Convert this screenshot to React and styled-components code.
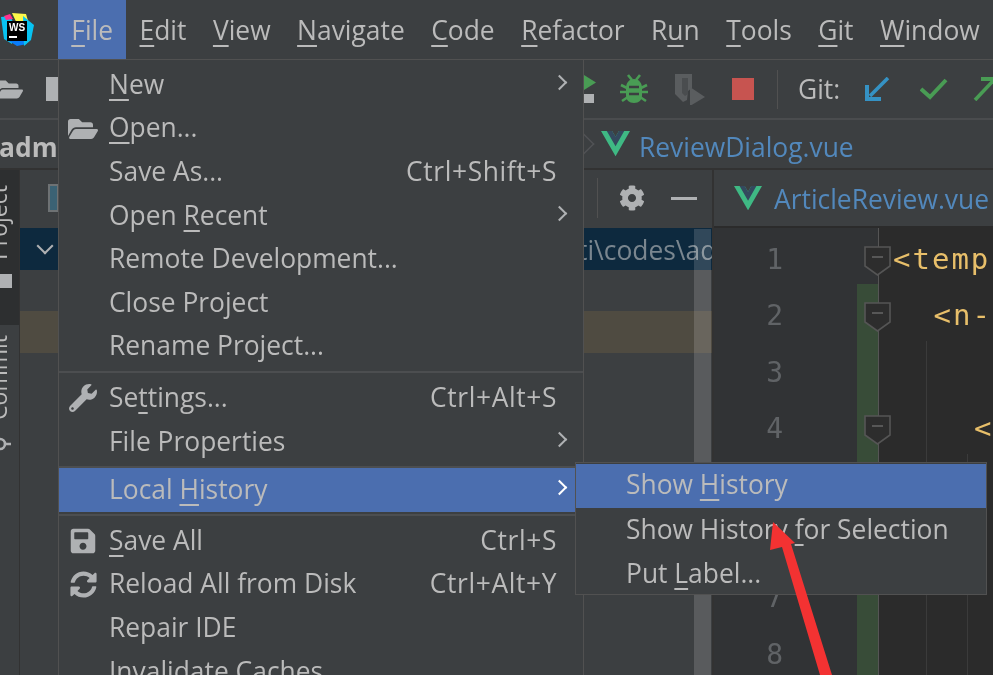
import React from "react";
import styled, { createGlobalStyle } from "styled-components";
import { FaCog, FaFolderOpen, FaSave, FaSyncAlt, FaWrench } from "react-icons/fa";

const menuBarItems = ["_File", "_Edit", "_View", "_Navigate", "_Code", "_Refactor", "R_un", "_Tools", "_Git", "_Window"];

const fileMenu = [
	[
		{ label: "_New", arrow: true },
		{ label: "_Open...", icon: "open" },
		{ label: "Save As...", shortcut: "Ctrl+Shift+S" },
		{ label: "Open _Recent", arrow: true },
		{ label: "Remote Development..." },
		{ label: "Close Project" },
		{ label: "Rename Project..." },
	],
	[
		{ label: "Se_ttings...", icon: "settings", shortcut: "Ctrl+Alt+S" },
		{ label: "File Properties", arrow: true },
	],
	[{ label: "Local _History", arrow: true, active: true }],
	[
		{ label: "_Save All", icon: "save", shortcut: "Ctrl+S" },
		{ label: "Reload All from Disk", icon: "reload", shortcut: "Ctrl+Alt+Y" },
		{ label: "Repair IDE" },
		{ label: "Invalidate Caches" },
	],
];

// height of the separator above each group of the file menu
const separatorHeights = [0, 8, 4.5, 7.5];

const historyMenu = [
	{ label: "Show _History", active: true },
	{ label: "Show History _for Selection" },
	{ label: "Put _Label..." },
];

const codeLines = [
	{ code: "<temp", indent: 0, fold: true, guides: 0 },
	{ code: "<n-", indent: 1, fold: true, changed: true, guides: 0 },
	{ code: "", indent: 0, changed: true, guides: 1 },
	{ code: "<", indent: 2, fold: true, changed: true, guides: 1 },
	{ code: "", indent: 0, changed: true, guides: 2 },
	{ code: "", indent: 0, changed: true, guides: 2 },
	{ code: "", indent: 0, changed: true, guides: 2 },
	{ code: "", indent: 0, changed: true, guides: 2 },
];

// "_" marks the mnemonic letter, as in the IDE's action names
const Label = ({ text }) => {
	const at = text.indexOf("_");
	if (at < 0) return text;
	return (
		<>
			{text.slice(0, at)}
			<Mnemonic>{text[at + 1]}</Mnemonic>
			{text.slice(at + 2)}
		</>
	);
};

const VueIcon = ({ size }) => (
	<svg width={size} height={size * 0.87} viewBox="0 0 261 226">
		<path fill="#3fb984" d="M161 0l-30 52L100 0H0l131 226L261 0z" />
		<path fill="#34495e" d="M161 0l-30 52L100 0H52l79 136L209 0z" />
	</svg>
);

const LogoIcon = () => (
	<svg width="34" height="34" viewBox="0 0 34 34">
		<path fill="#07c3f2" d="M0 4l10-1 4 14-3 14-8-5z" />
		<path fill="#087cfa" d="M5 26l11 7 10-2-6-8z" />
		<path fill="#fcf84a" d="M11 0l14 1 3 10-10 4z" />
		<path fill="#07c3f2" d="M22 3l11 9-3 15-7 6z" />
		<path fill="#ff318c" d="M3 3l6-2 3 5-7 1z" />
		<rect x="6" y="8" width="20" height="20" fill="#000" />
		<text x="8" y="18" fontFamily="Liberation Sans" fontWeight="700" fontSize="10" fill="#fff">
			WS
		</text>
		<rect x="8" y="23" width="8" height="2" fill="#fff" />
	</svg>
);

const BugIcon = () => (
	<svg width="28" height="30" viewBox="0 0 28 30">
		<g stroke="#499c54" strokeWidth="2.6" fill="none">
			<path d="M8 1l4 5M20 1l-4 5M1 11l6 3M27 11l-6 3M0 18h6M28 18h-6M2 27l6-4M26 27l-6-4" />
		</g>
		<path fill="#499c54" d="M14 5c5 0 8 4 8 9v7c0 5-3 8-8 8s-8-3-8-8v-7c0-5 3-9 8-9z" />
		<path stroke="#3c3f41" strokeWidth="2.4" d="M9 13h10M9 20h10" />
	</svg>
);

const RerunIcon = () => (
	<svg width="33" height="32" viewBox="0 0 33 32">
		<path fill="#5a5d5f" d="M2 1h17v14l-4 3-1 9-4 2-8-8z" />
		<path fill="#4a4d4f" d="M9 5h6v16l-3 2-3-3z" />
		<path fill="#5a5d5f" d="M17 14l15 10-15 9z" />
	</svg>
);

const ArrowIn = () => (
	<svg width="25" height="24" viewBox="0 0 25 24">
		<path stroke="#3592c4" strokeWidth="3.6" fill="none" d="M23 1L5 19" />
		<path fill="#3592c4" d="M0 8h4v12h12v4H0z" />
	</svg>
);

const CheckIcon = () => (
	<svg width="28" height="22" viewBox="0 0 28 22">
		<path stroke="#499c54" strokeWidth="4" fill="none" d="M1 11l9 8L26 2" />
	</svg>
);

const ArrowOut = () => (
	<svg width="30" height="24" viewBox="0 0 30 24">
		<path stroke="#499c54" strokeWidth="3.6" fill="none" d="M2 23L20 4" />
		<path fill="#499c54" d="M8 0h16v16h-4V4H8z" />
	</svg>
);

const FoldIcon = () => (
	<svg width="27" height="31" viewBox="0 0 27 31">
		<path fill="#2d2d2d" stroke="#555" strokeWidth="1.6" d="M1 1h25v19L13.5 29 1 20z" />
		<path stroke="#666" strokeWidth="1.5" d="M8 11h11" />
	</svg>
);

const CommitIcon = () => (
	<svg width="22" height="16" viewBox="0 0 22 16">
		<circle cx="11" cy="8" r="5" fill="none" stroke="#afb1b3" strokeWidth="2.6" />
		<path stroke="#afb1b3" strokeWidth="2.6" d="M0 8h6M16 8h6" />
	</svg>
);

const menuIcons = {
	open: <FaFolderOpen size={30} />,
	settings: <FaWrench size={28} />,
	save: <FaSave size={28} />,
	reload: <FaSyncAlt size={27} />,
};

const MenuRow = ({ item }) => (
	<Row $active={item.active}>
		<RowIcon>{item.icon && menuIcons[item.icon]}</RowIcon>
		<RowLabel>
			<Label text={item.label} />
		</RowLabel>
		{item.shortcut && <Shortcut>{item.shortcut}</Shortcut>}
		{item.arrow && <Chevron $bright={item.active} />}
	</Row>
);

const GlobalStyle = createGlobalStyle`
	html, body {
		margin: 0;
		background: #3c3f41;
	}
	* {
		box-sizing: border-box;
	}
`;

const App = () => {
	return (
		<Page>
			<GlobalStyle />
			<MenuBar>
				<LogoSlot>
					<LogoIcon />
				</LogoSlot>
				{menuBarItems.map((item, i) => (
					<MenuBarItem key={item} $open={i === 0}>
						<Label text={item} />
					</MenuBarItem>
				))}
			</MenuBar>

			<Toolbar>
				<FolderSlot>
					<FaFolderOpen size={27} />
				</FolderSlot>
				<SaveStub />
				<RunGroup>
					<PlayStack>
						<PlayStub />
						<StopStub />
					</PlayStack>
					<BugSlot>
						<BugIcon />
					</BugSlot>
					<RerunSlot>
						<RerunIcon />
					</RerunSlot>
					<StopButton />
					<ToolbarDivider />
					<GitLabel>Git:</GitLabel>
					<ArrowSlot>
						<ArrowIn />
					</ArrowSlot>
					<CheckSlot>
						<CheckIcon />
					</CheckSlot>
					<OutSlot>
						<ArrowOut />
					</OutSlot>
				</RunGroup>
			</Toolbar>

			<NavBar>
				<ProjectName>adm</ProjectName>
				<Crumb>
					<CrumbArrow />
					<VueIcon size={29} />
					<FileName>ReviewDialog.vue</FileName>
				</Crumb>
			</NavBar>

			<Workspace>
				<Stripe>
					<StripeTab $active>
						<VerticalText>Project</VerticalText>
						<StripeSquare />
					</StripeTab>
					<StripeTab>
						<VerticalText>Commit</VerticalText>
						<CommitSlot>
							<CommitIcon />
						</CommitSlot>
					</StripeTab>
				</Stripe>

				<ProjectPanel>
					<PanelHeader>
						<PanelIconStub />
						<PanelActions>
							<PanelDivider />
							<FaCog size={26} />
							<MinusBar />
						</PanelActions>
					</PanelHeader>
					<Tree>
						<TreeRow $kind="selected">
							<TreeChevron />
							<TreePath>ti\codes\ad</TreePath>
						</TreeRow>
						<TreeRow />
						<TreeRow $kind="modified" />
						<ScrollThumb />
					</Tree>
				</ProjectPanel>

				<EditorColumn>
					<TabBar>
						<VueIcon size={28} />
						<TabName>ArticleReview.vue</TabName>
					</TabBar>
					<Editor>
						{codeLines.map((line, i) => (
							<CodeRow key={i}>
								<LineNumber>{i + 1}</LineNumber>
								<ChangeCell $changed={line.changed}>
									{line.fold && (
										<FoldSlot>
											<FoldIcon />
										</FoldSlot>
									)}
								</ChangeCell>
								<CodeCell $guides={line.guides}>
									<CodeText $indent={line.indent}>{line.code}</CodeText>
								</CodeCell>
							</CodeRow>
						))}
					</Editor>
				</EditorColumn>
			</Workspace>

			<FileMenu>
				{fileMenu.map((group, i) => (
					<MenuGroup key={i}>
						{i > 0 && <Separator $height={separatorHeights[i]} />}
						{group.map((item) => (
							<MenuRow key={item.label} item={item} />
						))}
					</MenuGroup>
				))}
			</FileMenu>

			<SubMenu>
				{historyMenu.map((item) => (
					<MenuRow key={item.label} item={item} />
				))}
			</SubMenu>

			<RedArrow viewBox="0 0 100 170">
				<path fill="#f33232" d="M11 2L8 30l12-3 38 128h12L29 24l4-1z" />
			</RedArrow>
		</Page>
	);
};

const Page = styled.div`
	position: relative;
	display: flex;
	flex-direction: column;
	width: 993px;
	height: 675px;
	overflow: hidden;
	background: #3c3f41;
	color: #bbbbbb;
	font-family: "Open Sans", "Liberation Sans", sans-serif;
	font-size: 26.4px;
	filter: blur(0.35px);
`;

const Mnemonic = styled.span`
	text-decoration: underline;
	text-decoration-thickness: 2px;
	text-underline-offset: 5px;
`;

const MenuBar = styled.div`
	display: flex;
	flex: 0 0 60px;
	align-items: stretch;
	border-bottom: 1px solid #515151;
`;

const LogoSlot = styled.div`
	display: flex;
	align-items: center;
	width: 58px;
	padding: 0 0 0 1px;
`;

const MenuBarItem = styled.div`
	display: flex;
	align-items: center;
	padding: 0 13.25px;
	white-space: nowrap;
	background: ${({ $open }) => ($open ? "#4b6eaf" : "transparent")};
`;

const Toolbar = styled.div`
	display: flex;
	flex: 0 0 60px;
	align-items: center;
	border-bottom: 2px solid #4a4c4e;
`;

const FolderSlot = styled.div`
	display: flex;
	margin: 0 0 0 -4px;
	color: #afb1b3;
`;

const SaveStub = styled.div`
	width: 12px;
	height: 24px;
	margin: 0 0 0 23px;
	background: #afb1b3;
`;

const RunGroup = styled.div`
	display: flex;
	align-items: center;
	width: 409px;
	margin-left: auto;
	overflow: hidden;
`;

const PlayStack = styled.div`
	display: flex;
	flex: none;
	flex-direction: column;
	gap: 4px;
	width: 12px;
`;

const PlayStub = styled.div`
	width: 12px;
	height: 15px;
	background: #499c54;
	clip-path: polygon(0 0, 100% 50%, 0 100%);
`;

const StopStub = styled.div`
	width: 10px;
	height: 9px;
	background: #afb1b3;
`;

const BugSlot = styled.div`
	display: flex;
	flex: none;
	margin: 0 0 0 24px;
`;

const RerunSlot = styled.div`
	display: flex;
	flex: none;
	margin: 0 0 0 25px;
`;

const StopButton = styled.div`
	flex: none;
	width: 22px;
	height: 22px;
	margin: 0 0 0 26px;
	background: #c75450;
`;

const ToolbarDivider = styled.div`
	flex: none;
	width: 1px;
	height: 39px;
	margin: 0 0 0 23px;
	background: #515151;
`;

const GitLabel = styled.div`
	flex: none;
	margin: 0 0 1px 20px;
`;

const ArrowSlot = styled.div`
	display: flex;
	flex: none;
	margin: 0 0 0 25px;
`;

const CheckSlot = styled.div`
	display: flex;
	flex: none;
	margin: 0 0 0 30px;
`;

const OutSlot = styled.div`
	display: flex;
	flex: none;
	margin: 0 0 0 25px;
`;

const NavBar = styled.div`
	display: flex;
	flex: 0 0 50px;
	align-items: center;
	justify-content: space-between;
	border-bottom: 2px solid #323232;
`;

const ProjectName = styled.div`
	font-weight: 700;
	margin: 0 0 0 -1px;
	padding: 5px 0 0;
`;

const Crumb = styled.div`
	display: flex;
	align-items: center;
	width: 410px;
	gap: 9px;
`;

const CrumbArrow = styled.div`
	width: 10px;
	height: 10px;
	margin: 0 3px 0 -4px;
	border-top: 1px solid #515355;
	border-right: 1px solid #515355;
	transform: rotate(45deg) scale(1.5);
	transform-origin: center;
`;

const FileName = styled.div`
	padding: 5px 0 0;
	color: #5288bc;
`;

const Workspace = styled.div`
	display: flex;
	flex: 1;
	min-height: 0;
`;

const Stripe = styled.div`
	display: flex;
	flex: 0 0 20px;
	flex-direction: column;
	overflow: hidden;
	border-right: 1px solid #323232;
`;

const StripeTab = styled.div`
	display: flex;
	flex-direction: column;
	align-items: flex-start;
	height: ${({ $active }) => ($active ? "155px" : "auto")};
	padding: ${({ $active }) => ($active ? "15px 0 0" : "0")};
	margin: ${({ $active }) => ($active ? "0 0 10px" : "0")};
	background: ${({ $active }) => ($active ? "#2d2f30" : "transparent")};
`;

const VerticalText = styled.div`
	margin: 0 0 0 -17px;
	writing-mode: vertical-rl;
	transform: rotate(180deg);
	font-size: 23px;
	line-height: 30px;
`;

const StripeSquare = styled.div`
	width: 12px;
	height: 14px;
	margin: 14px 0 0;
	background: #afb1b3;
`;

const CommitSlot = styled.div`
	display: flex;
	margin: 16px 0 0 -11px;
`;

const ProjectPanel = styled.div`
	display: flex;
	flex: 0 0 692px;
	flex-direction: column;
	min-width: 0;
	overflow: hidden;
`;

const PanelHeader = styled.div`
	display: flex;
	flex: 0 0 56px;
	align-items: center;
	justify-content: space-between;
`;

const PanelIconStub = styled.div`
	width: 11px;
	height: 28px;
	margin: 0 0 0 28px;
	border: 2px solid #6e7274;
	background: #3b6274;
`;

const PanelActions = styled.div`
	display: flex;
	align-items: center;
	width: 115px;
	gap: 21px;
	color: #afb1b3;
`;

const PanelDivider = styled.div`
	width: 1px;
	height: 40px;
	background: #515151;
`;

const MinusBar = styled.div`
	width: 26px;
	height: 3px;
	margin: 0 0 0 5px;
	background: #afb1b3;
`;

const Tree = styled.div`
	position: relative;
	flex: 1;
	padding: 2px 0 0;
	overflow: hidden;
`;

const treeBackgrounds = { selected: "#0d293e", modified: "#4f4b41" };

const TreeRow = styled.div`
	display: flex;
	align-items: center;
	height: 41.5px;
	white-space: nowrap;
	overflow: hidden;
	background: ${({ $kind }) => treeBackgrounds[$kind] || "transparent"};
`;

const TreeChevron = styled.div`
	flex: none;
	width: 12px;
	height: 12px;
	margin: -6px 0 0 19px;
	border-right: 2px solid #afb1b3;
	border-bottom: 2px solid #afb1b3;
	transform: rotate(45deg);
`;

const TreePath = styled.div`
	margin: 0 0 0 527px;
	padding: 3px 0 0;
	color: #7a868f;
`;

const ScrollThumb = styled.div`
	position: absolute;
	top: 3px;
	right: 1px;
	bottom: 0;
	width: 17px;
	background: rgba(255, 255, 255, 0.15);
`;

const EditorColumn = styled.div`
	display: flex;
	flex: 1;
	flex-direction: column;
	min-width: 0;
	border-left: 2px solid #323232;
`;

const TabBar = styled.div`
	display: flex;
	flex: 0 0 56px;
	align-items: center;
	gap: 12px;
	padding: 0 0 0 20px;
	white-space: nowrap;
	background: #3c3f41;
`;

const TabName = styled.div`
	padding: 2px 0 0;
	color: #5288bc;
`;

const Editor = styled.div`
	flex: 1;
	padding: 2px 0 0;
	overflow: hidden;
	background: #2b2b2b;
`;

const CodeRow = styled.div`
	display: flex;
	height: 56.4px;
`;

const LineNumber = styled.div`
	flex: 0 0 143px;
	padding: 0 74px 0 0;
	text-align: right;
	line-height: 64px;
	font-family: "DejaVu Sans Mono", monospace;
	font-size: 28px;
	color: #606366;
	background: #313335;
`;

const ChangeCell = styled.div`
	position: relative;
	flex: 0 0 22px;
	border-right: 1px solid #555555;
	background: ${({ $changed }) => ($changed ? "#384c38" : "#313335")};
`;

const FoldSlot = styled.div`
	position: absolute;
	top: 18px;
	left: 7px;
	display: flex;
`;

const CodeCell = styled.div`
	flex: 1;
	padding: 0 0 0 14px;
	background-image: ${({ $guides }) =>
		$guides === 2
			? "linear-gradient(#3b3b3b, #3b3b3b), linear-gradient(#3b3b3b, #3b3b3b)"
			: $guides === 1
				? "linear-gradient(#3b3b3b, #3b3b3b)"
				: "none"};
	background-size: 1px 100%, 1px 100%;
	background-repeat: no-repeat;
	background-position: 47px 0, 88px 0;
`;

const CodeText = styled.div`
	padding: 0 0 0 ${({ $indent }) => $indent * 40.5}px;
	font-family: "DejaVu Sans Mono", monospace;
	font-size: 29px;
	letter-spacing: 2px;
	line-height: 62px;
	white-space: pre;
	color: #e8bf6a;
`;

const FileMenu = styled.div`
	position: absolute;
	top: 60px;
	left: 58px;
	width: 526px;
	height: 640px;
	padding: 3.5px 0 0;
	border-left: 1px solid #515151;
	border-right: 1px solid #515151;
	background: #3c3f41;
`;

const MenuGroup = styled.div`
	display: flex;
	flex-direction: column;
`;

const Separator = styled.div`
	height: ${({ $height }) => $height}px;
	padding: 2px 0 0;

	&::before {
		display: block;
		content: "";
		height: 2px;
		background: #4c4e50;
	}
`;

const Row = styled.div`
	display: flex;
	flex: none;
	align-items: center;
	height: 43.6px;
	padding: 0 13px 0 0;
	white-space: nowrap;
	background: ${({ $active }) => ($active ? "#4b6eaf" : "transparent")};
`;

const RowIcon = styled.div`
	display: flex;
	flex: 0 0 50px;
	justify-content: center;
	padding: 0 2px 0 0;
	color: #afb1b3;
`;

const RowLabel = styled.div`
	flex: 1;
	padding: 0 0 3px;
`;

const Shortcut = styled.div`
	padding: 0 0 3px;
	margin: 0 13px 0 0;
	letter-spacing: 0.6px;
`;

const Chevron = styled.div`
	width: 11px;
	height: 11px;
	margin: 0 5px 6px 0;
	border-top: 2px solid ${({ $bright }) => ($bright ? "#ffffff" : "#afb1b3")};
	border-right: 2px solid ${({ $bright }) => ($bright ? "#ffffff" : "#afb1b3")};
	transform: rotate(45deg);
`;

const SubMenu = styled.div`
	position: absolute;
	top: 462px;
	left: 575px;
	display: flex;
	flex-direction: column;
	gap: 1px;
	width: 412px;
	padding: 1px 0 0;
	height: 133px;
	border: 1px solid #515151;
	background: #3c3f41;
`;

const RedArrow = styled.svg`
	position: absolute;
	top: 520px;
	left: 762px;
	width: 100px;
	height: 170px;
`;

export default App;
